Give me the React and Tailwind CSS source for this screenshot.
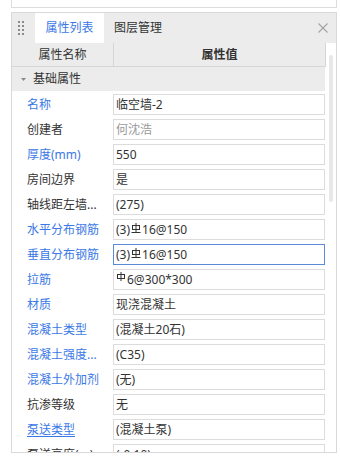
import React from "react";

const BLUE = "text-[#3a78e6]";

function Rebar3() {
  return (
    <svg width="10" height="11" viewBox="0 0 10 11" className="inline-block mx-[1px] -mt-[2px]" fill="none" stroke="#333" strokeWidth="1">
      <line x1="5" y1="0" x2="5" y2="9.5" />
      <rect x="1.5" y="2.5" width="7" height="4" />
      <line x1="0.5" y1="9.5" x2="9.5" y2="9.5" />
    </svg>
  );
}

function Rebar1() {
  return (
    <svg width="10" height="9" viewBox="0 0 10 9" className="inline-block mr-[1px] -mt-[6px]" fill="none" stroke="#333" strokeWidth="1">
      <line x1="5" y1="0" x2="5" y2="9" />
      <rect x="1.5" y="2.5" width="7" height="4" />
    </svg>
  );
}

const rows = [
  { label: "名称", blue: true, value: "临空墙-2" },
  { label: "创建者", value: "何沈浩", gray: true },
  { label: "厚度(mm)", blue: true, value: "550" },
  { label: "房间边界", value: "是" },
  { label: "轴线距左墙...", value: "(275)" },
  { label: "水平分布钢筋", blue: true, value: (<>(3)<Rebar3 />16@150</>) },
  { label: "垂直分布钢筋", blue: true, value: (<>(3)<Rebar3 />16@150</>), focus: true },
  { label: "拉筋", blue: true, value: (<><Rebar1 />6@300*300</>) },
  { label: "材质", blue: true, value: "现浇混凝土" },
  { label: "混凝土类型", blue: true, value: "(混凝土20石)" },
  { label: "混凝土强度...", blue: true, value: "(C35)" },
  { label: "混凝土外加剂", blue: true, value: "(无)" },
  { label: "抗渗等级", value: "无" },
  { label: "泵送类型", blue: true, value: "(混凝土泵)", underline: true },
  { label: "泵送高度(m)", value: "(-0.10)" },
];

export default function App() {
  return (
    <div className="w-[340px] h-[457px] bg-white overflow-hidden font-['Noto_Sans','Noto_Sans_CJK_SC',sans-serif] text-[12px] text-[#333]">
      <div className="ml-[11px] w-[326px] h-[8px] border-x border-b border-[#dcdcdc]" />
      <div className="mt-[4px] ml-[11px] w-[326px] h-[441px] border border-[#d9d9d9] flex flex-col overflow-hidden">
        {/* tab bar */}
        <div className="h-[30px] shrink-0 bg-[#ececec] flex items-stretch">
          <div className="ml-[6px] w-[6px] grid grid-cols-2 gap-x-[2px] gap-y-[2px] content-center">
            {Array.from({ length: 8 }).map((_, i) => (
              <div key={i} className="w-[2px] h-[2px] bg-[#8a8a8a]" />
            ))}
          </div>
          <div className="ml-[11px] w-[69px] bg-white flex items-center justify-center text-[#3a78e6]">属性列表</div>
          <div className="w-[68px] flex items-center justify-center">图层管理</div>
          <div className="flex-1" />
          <div className="mr-[8px] flex items-center">
            <svg width="10" height="10" viewBox="0 0 10 10" stroke="#a3a3a3" strokeWidth="1.1">
              <line x1="0.5" y1="0.5" x2="9.5" y2="9.5" />
              <line x1="9.5" y1="0.5" x2="0.5" y2="9.5" />
            </svg>
          </div>
        </div>
        <div className="flex flex-1 min-h-0">
          <div className="w-[314px] shrink-0 flex flex-col">
            {/* header */}
            <div className="h-[24px] shrink-0 flex bg-[#ececec] border-b border-r border-[#d6d6d6]">
              <div className="w-[101px] flex items-center justify-center">属性名称</div>
              <div className="flex-1 border-l border-[#d6d6d6] flex items-center justify-center font-bold">属性值</div>
            </div>
            {/* group */}
            <div className="h-[24px] shrink-0 mr-[1px] bg-[#ececec] flex items-center">
              <svg width="5" height="3" viewBox="0 0 5 3" className="ml-[9px]">
                <polygon points="0,0 5,0 2.5,3" fill="#8a8a8a" />
              </svg>
              <span className="ml-[7px]">基础属性</span>
            </div>
            {rows.map((r, i) => (
              <div key={i} className="h-[25px] shrink-0 flex pt-[3px]">
                <div className={`w-[101px] h-[21px] pl-[15px] flex items-center whitespace-nowrap ${r.blue ? BLUE : "text-[#333]"}`}>
                  <span className={r.underline ? "underline underline-offset-2" : ""}>{r.label}</span>
                </div>
                <div className={`w-[212px] h-[21px] border ${r.focus ? "border-[#5a8ad8]" : "border-[#dcdcdc]"} pl-[2px] flex items-center whitespace-nowrap ${r.gray ? "text-[#9a9a9a]" : "text-[#333]"}`}>
                  {r.value}
                </div>
              </div>
            ))}
          </div>
          <div className="flex-1 flex flex-col">
            <div className="ml-[3px] mt-[12px] w-[4px] h-[147px] rounded-full bg-[#e8e8e8]" />
          </div>
        </div>
      </div>
    </div>
  );
}
